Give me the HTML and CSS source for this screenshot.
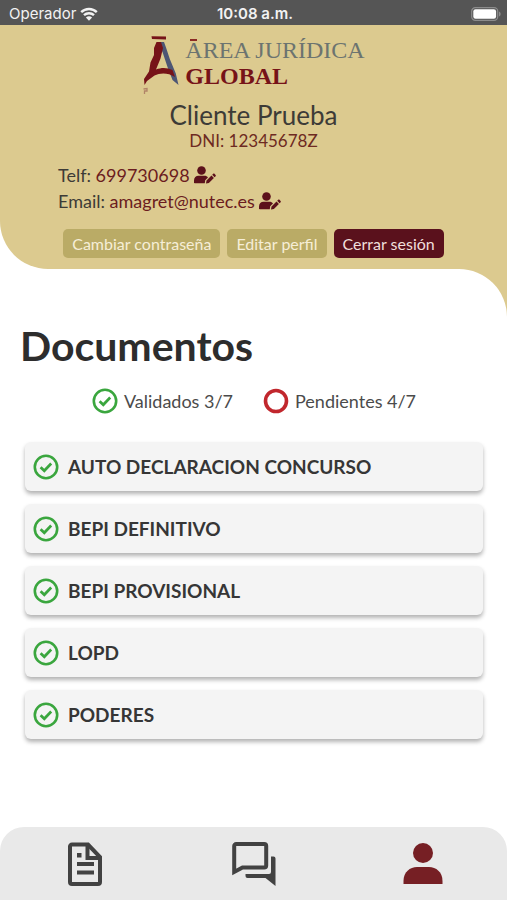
FILE: index.html
```html
<!DOCTYPE html>
<html lang="es">
<head>
<meta charset="utf-8">
<meta name="viewport" content="width=device-width, initial-scale=1">
<title>Área Jurídica Global</title>
<link rel="stylesheet" href="styles.css">
</head>
<body>
<svg class="sprite" aria-hidden="true">
  <symbol id="check" viewBox="0 0 26 26">
    <circle cx="13" cy="13" r="11.2" fill="none" stroke="currentColor" stroke-width="2.6"/>
    <path d="M7.600 13.200l3.700 3.600 6.900-7.300" fill="none" stroke="currentColor" stroke-width="2.700"/>
  </symbol>
  <symbol id="user-edit" viewBox="0 0 22 18">
    <circle cx="7.500" cy="4.500" r="4.300"/>
    <path d="M0 17v-2.500C0 11.500 2 9.800 4.500 9.800h6c1.500 0 2.700.6 3.500 1.600L11.200 14.200 10.800 17.200H1z"/>
    <path d="M12 17.500l.5-3 5-5 2.400 2.400-5 5zM18.200 8.800l1-1c.4-.4.900-.4 1.300 0l1.100 1.100c.4.400.4.900 0 1.300l-1 1z"/>
  </symbol>
</svg>
<div class="app">
  <div class="status">
    <span class="carrier">Operador
      <svg class="wifi" viewBox="0 0 18 14" aria-hidden="true">
        <path d="M1.200 5.200C5.500.9 12.500.9 16.800 5.200M4 8.200c2.800-2.700 7.200-2.700 10 0" fill="none" stroke="currentColor" stroke-width="2.400"/>
        <path d="M5.900 10.500c1.700-1.700 4.500-1.700 6.200 0L9 13.700z" fill="currentColor"/>
      </svg>
    </span>
    <span class="clock">10:08 a.m.</span>
    <span class="battery">
      <svg viewBox="0 0 30 14" width="30" height="14" aria-hidden="true">
        <rect x=".7" y=".7" width="26" height="12.600" rx="3.600" fill="none" stroke="#8c8c8c" stroke-width="1.200"/>
        <rect x="2.300" y="2.200" width="22.800" height="9.600" rx="2.200" fill="#fff"/>
        <path d="M28 4.500c2.200.8 2.200 4.200 0 5z" fill="#8c8c8c"/>
      </svg>
    </span>
  </div>
  <header class="profile">
    <div class="brand">
      <svg class="mark" viewBox="0 0 38 60" aria-hidden="true">
        <path d="M9.500 1.200l14.500.2v3L10 4z" fill="#761318"/>
        <path d="M15.500 7h6.500l2 5.500 3.800 11.500 6 14.500L36.500 50l-6-5-5-13-5-15z" fill="#4d5674"/>
        <path d="M14.500 7h4.500l2 6-2.500 10.500-4.500 11c6-2.300 11-2 16.500.5l2.500 7c-7-4.500-14.500-4.500-20.500-1.500L5 46l-2.500 4L2 44l5-7.500 1.500-9 3.500-7.500V13z" fill="#761318"/>
        <path d="M1.500 54l3.500-.5v2.500H2.500v3" fill="none" stroke="#b18468" stroke-width="1.300"/>
      </svg>
      <div class="brand-name">
        <span class="brand-top"><span class="initial">A</span>REA JURÍDICA</span>
        <span class="brand-bottom">GLOBAL</span>
      </div>
    </div>
    <h1>Cliente Prueba</h1>
    <p class="dni">DNI: 12345678Z</p>
    <div class="contact">
      <p>Telf: <a href="tel:699730698">699730698</a>
        <button class="edit" aria-label="Editar teléfono"><svg aria-hidden="true"><use href="#user-edit"/></svg></button></p>
      <p>Email: <a href="mailto:amagret@nutec.es">amagret@nutec.es</a>
        <button class="edit" aria-label="Editar email"><svg aria-hidden="true"><use href="#user-edit"/></svg></button></p>
    </div>
    <div class="actions">
      <button>Cambiar contraseña</button>
      <button>Editar perfil</button>
      <button class="logout">Cerrar sesión</button>
    </div>
  </header>
  <div class="sheet">
    <main>
      <h2>Documentos</h2>
      <div class="summary">
        <span class="stat"><svg class="tick" aria-hidden="true"><use href="#check"/></svg>Validados 3/7</span>
        <span class="stat"><svg class="pending" viewBox="0 0 26 26" aria-hidden="true"><circle cx="13" cy="13" r="10.500" fill="none" stroke="currentColor" stroke-width="3.600"/></svg>Pendientes 4/7</span>
      </div>
      <ul class="docs">
        <li><a href="#auto"><svg class="tick" aria-hidden="true"><use href="#check"/></svg><span>AUTO DECLARACION CONCURSO</span></a></li>
        <li><a href="#bepi-definitivo"><svg class="tick" aria-hidden="true"><use href="#check"/></svg><span>BEPI DEFINITIVO</span></a></li>
        <li><a href="#bepi-provisional"><svg class="tick" aria-hidden="true"><use href="#check"/></svg><span>BEPI PROVISIONAL</span></a></li>
        <li><a href="#lopd"><svg class="tick" aria-hidden="true"><use href="#check"/></svg><span>LOPD</span></a></li>
        <li><a href="#poderes"><svg class="tick" aria-hidden="true"><use href="#check"/></svg><span>PODERES</span></a></li>
      </ul>
    </main>
  </div>
  <nav class="tabs">
    <a href="#documentos" aria-label="Documentos">
      <svg viewBox="0 0 36 44" aria-hidden="true">
        <path d="M5 2.500h16L33 15v25a2 2 0 0 1-2 2H5a2 2 0 0 1-2-2V4.500a2 2 0 0 1 2-2z" fill="none" stroke="currentColor" stroke-width="4"/>
        <path d="M20.500 3v13H33" fill="none" stroke="currentColor" stroke-width="4"/>
        <path d="M10 11h4.500v4.500H10zM10 20h17v4H10zM10 28.500h17v4H10z" fill="currentColor"/>
      </svg>
    </a>
    <a href="#mensajes" aria-label="Mensajes">
      <svg viewBox="0 0 44 44" aria-hidden="true">
        <path d="M2.200 30V4a2 2 0 0 1 2-2h28a2 2 0 0 1 2 2v19.500a2 2 0 0 1-2 2H10.500z" fill="none" stroke="currentColor" stroke-width="4"/>
        <path d="M39 14.500h2.500a2 2 0 0 1 2 2V44L33.500 36H15.500a2 2 0 0 1-2-2v-2H37a2 2 0 0 0 2-2z" fill="currentColor"/>
      </svg>
    </a>
    <a href="#perfil" class="current" aria-label="Perfil" aria-current="page">
      <svg viewBox="0 0 40 44" aria-hidden="true">
        <circle cx="20" cy="11" r="10" fill="currentColor"/>
        <path d="M.5 42v-3C.5 30 7 25 14 25h12c7 0 13.500 5 13.500 14v3z" fill="currentColor"/>
      </svg>
    </a>
  </nav>
</div>
</body>
</html>
```
FILE: styles.css
```css
* { box-sizing: border-box; }

body {
  margin: 0;
  background: #fff;
  color: #3d3b37;
  font-family: Lato, "Open Sans", sans-serif;
  font-size: 18px;
  line-height: 26px;
}

h1, h2, p, ul { margin: 0; padding: 0; }
ul { list-style: none; }
a { color: inherit; text-decoration: none; }
button { font: inherit; border: 0; cursor: pointer; }

.sprite { display: none; }

.app {
  display: flex;
  flex-direction: column;
  min-height: 100vh;
}

.status {
  display: grid;
  grid-template-columns: 1fr auto 1fr;
  align-items: center;
  height: 25px;
  padding: 2px 6px 0 9px;
  background: #555;
  color: #f2f2f2;
  font-family: Inter, sans-serif;
  font-size: 15px;
  line-height: 20px;
}
.carrier { display: flex; align-items: center; gap: 4px; }
.wifi { width: 18px; height: 14px; }
.clock { font-weight: 600; }
.battery { display: flex; justify-content: flex-end; }

.profile {
  display: flex;
  flex-direction: column;
  align-items: center;
  padding: 10px 16px 11px;
  border-bottom-left-radius: 48px;
  background: #dcca8f;
}

.brand { display: flex; gap: 5px; color: #6c7470; }
.mark { width: 38px; height: 60px; }
.brand-name {
  display: flex;
  flex-direction: column;
  padding-top: 2px;
  font-family: "Liberation Serif", serif;
  font-size: 24px;
  line-height: 26px;
}
.initial { position: relative; }
.initial::before {
  content: "";
  position: absolute;
  top: 2px;
  left: 5px;
  width: 7px;
  height: 2px;
  background: #8b2a24;
}
.brand-bottom { color: #761318; font-weight: 700; }

h1 { margin-top: 5px; font-size: 26px; font-weight: 400; line-height: 30px; }
.dni { font-size: 17px; line-height: 22px; color: #6e2a22; }
.contact { width: 100%; max-width: 391px; margin-top: 10px; }
.contact p { display: flex; align-items: center; white-space: pre; }
.contact a { color: #6b1c20; }
.edit { display: flex; margin-left: 4px; padding: 0; background: none; color: #5c111b; }
.edit svg { width: 22px; height: 18px; fill: currentColor; }

.actions { display: flex; gap: 7px; margin-top: 15px; }
.actions button {
  padding: 2px 9px 1px;
  border-radius: 5px;
  background: #baab66;
  color: #f6eed7;
  font-size: 16px;
}
.actions .logout { background: #5a111c; color: #f0dfdb; }

.sheet { display: flex; flex: 1; background: #dcca8f; }
main {
  flex: 1;
  padding: 53px 24px 24px 25px;
  border-top-right-radius: 48px;
  background: #fff;
}
h2 { margin-left: -5px; color: #2d2d2d; font-size: 41px; line-height: 48px; }
.summary { display: flex; justify-content: center; gap: 30px; margin-top: 18px; }
.stat { display: flex; align-items: center; gap: 6px; color: #4b4b4b; }
.tick, .pending { flex: none; width: 26px; height: 26px; }
.tick { color: #3aa63e; }
.pending { color: #c1272d; }

.docs { display: grid; gap: 13px; margin-top: 28px; }
.docs a {
  display: flex;
  align-items: center;
  gap: 9px;
  min-height: 49px;
  padding: 0 8px;
  border-radius: 6px;
  background: #f4f4f4;
  box-shadow: 0 3px 4px rgba(0, 0, 0, .3);
  color: #363636;
  font-size: 19px;
  font-weight: 700;
}

.tabs {
  display: grid;
  grid-template-columns: repeat(3, 1fr);
  height: 73px;
  border-radius: 24px 24px 0 0;
  background: #e9e9e9;
  color: #424242;
}
.tabs a { display: flex; align-items: center; justify-content: center; }
.tabs svg { height: 44px; }
.tabs .current { color: #761f24; }
```
